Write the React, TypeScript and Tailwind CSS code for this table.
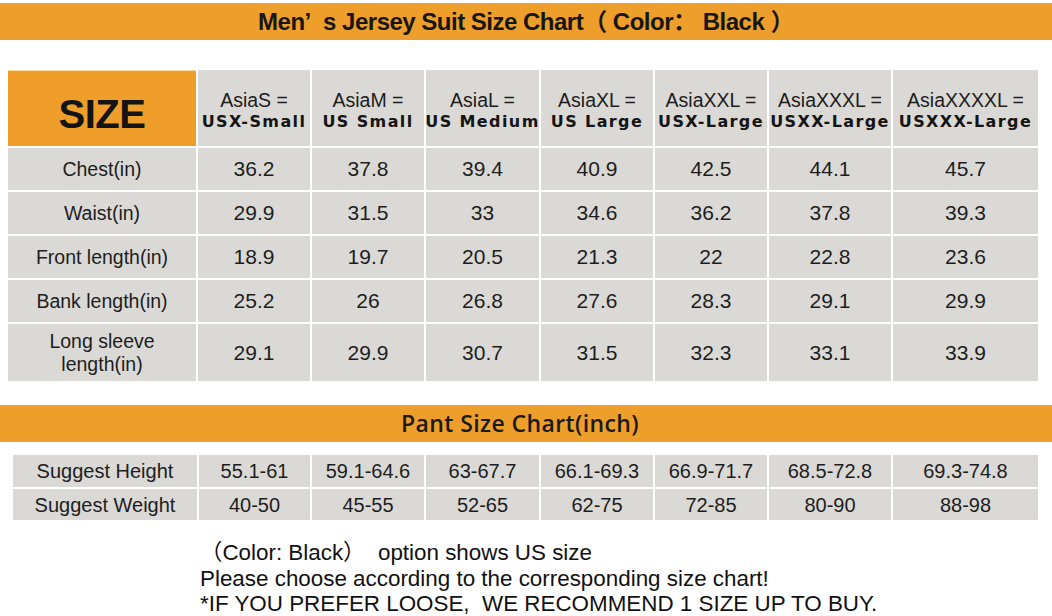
const sizes = [
  { asia: "AsiaS =", us: "USX-Small" },
  { asia: "AsiaM =", us: "US Small" },
  { asia: "AsiaL =", us: "US Medium" },
  { asia: "AsiaXL =", us: "US Large" },
  { asia: "AsiaXXL =", us: "USX-Large" },
  { asia: "AsiaXXXL =", us: "USXX-Large" },
  { asia: "AsiaXXXXL =", us: "USXXX-Large" },
];

const jerseyRows = [
  { label: "Chest(in)", values: ["36.2", "37.8", "39.4", "40.9", "42.5", "44.1", "45.7"] },
  { label: "Waist(in)", values: ["29.9", "31.5", "33", "34.6", "36.2", "37.8", "39.3"] },
  { label: "Front length(in)", values: ["18.9", "19.7", "20.5", "21.3", "22", "22.8", "23.6"] },
  { label: "Bank length(in)", values: ["25.2", "26", "26.8", "27.6", "28.3", "29.1", "29.9"] },
  { label: "Long sleeve length(in)", values: ["29.1", "29.9", "30.7", "31.5", "32.3", "33.1", "33.9"] },
];

const pantRows = [
  {
    label: "Suggest Height",
    values: ["55.1-61", "59.1-64.6", "63-67.7", "66.1-69.3", "66.9-71.7", "68.5-72.8", "69.3-74.8"],
  },
  { label: "Suggest Weight", values: ["40-50", "45-55", "52-65", "62-75", "72-85", "80-90", "88-98"] },
];

const cell = "bg-[#dbd9d5] flex items-center justify-center text-center text-[#1d1d1d]";

const App = () => {
  return (
    <div className="w-[1052px] h-[616px] bg-white overflow-hidden font-['Liberation_Sans',Arial,sans-serif]">
      {/* title bar */}
      <div className="mt-[3px] h-[37px] bg-[#ee9e2a] flex items-center justify-center">
        <h1 className="text-[24px] font-bold text-[#161616] tracking-[-0.5px] font-['Liberation_Sans_Narrow','Liberation_Sans','Noto_Sans_CJK_SC',sans-serif]">
          Men’&nbsp; s Jersey Suit Size Chart（ Color：&nbsp;Black ）
        </h1>
      </div>

      {/* jersey table */}
      <div className="mt-[30px] ml-[8px] w-[1030px] grid grid-cols-[188px_112px_112px_113px_112px_112px_122px_145px] grid-rows-[76px_42px_42px_42px_42px_57px] gap-[2px]">
        <div className="bg-[#ef9e2a] border-t border-[#f7d9a0] flex items-center justify-center pt-[10px]">
          <span className="text-[40px] font-bold text-[#141414] tracking-[-0.5px]">SIZE</span>
        </div>
        {sizes.map((s) => (
          <div key={s.asia} className={`${cell} flex-col pt-[6px]`}>
            <span className="text-[19.5px] leading-[22px]">{s.asia}</span>
            <span className="text-[16px] leading-[22px] font-bold whitespace-nowrap tracking-[1.4px] font-['DejaVu_Sans',sans-serif] text-[#141414]">
              {s.us}
            </span>
          </div>
        ))}
        {jerseyRows.map((row) => (
          <>
            <div key={row.label} className={`${cell} text-[19.5px] leading-[23px] px-1`}>
              {row.label === "Long sleeve length(in)" ? (
                <span>
                  Long sleeve
                  <br />
                  length(in)
                </span>
              ) : (
                row.label
              )}
            </div>
            {row.values.map((v, i) => (
              <div key={row.label + i} className={`${cell} text-[21px]`}>
                {v}
              </div>
            ))}
          </>
        ))}
      </div>

      {/* pant header */}
      <div className="mt-[24px] h-[37px] bg-[#ee9e2a] flex items-center justify-center">
        <h2 className="text-[23px] font-semibold text-[#1a1a1a] tracking-[0.4px] font-['Open_Sans',sans-serif] pr-[12px]">
          Pant Size Chart(inch)
        </h2>
      </div>

      {/* pant table */}
      <div className="mt-[13px] ml-[13px] w-[1025px] grid grid-cols-[184px_111px_112px_113px_112px_112px_122px_145px] grid-rows-[32px_31px] gap-[2px]">
        {pantRows.map((row) => (
          <>
            <div key={row.label} className={`${cell} text-[20px]`}>
              {row.label}
            </div>
            {row.values.map((v, i) => (
              <div key={row.label + i} className={`${cell} text-[20px]`}>
                {v}
              </div>
            ))}
          </>
        ))}
      </div>

      {/* notes */}
      <div className="mt-[20px] ml-[200px] text-[22.4px] leading-[25.5px] text-[#111] font-['Liberation_Sans','Noto_Sans_CJK_SC',sans-serif]">
        <p>（Color: Black）&nbsp; option shows US size</p>
        <p>Please choose according to the corresponding size chart!</p>
        <p>*IF YOU PREFER LOOSE,&nbsp; WE RECOMMEND 1 SIZE UP TO BUY.</p>
      </div>
    </div>
  );
};

export default App;
